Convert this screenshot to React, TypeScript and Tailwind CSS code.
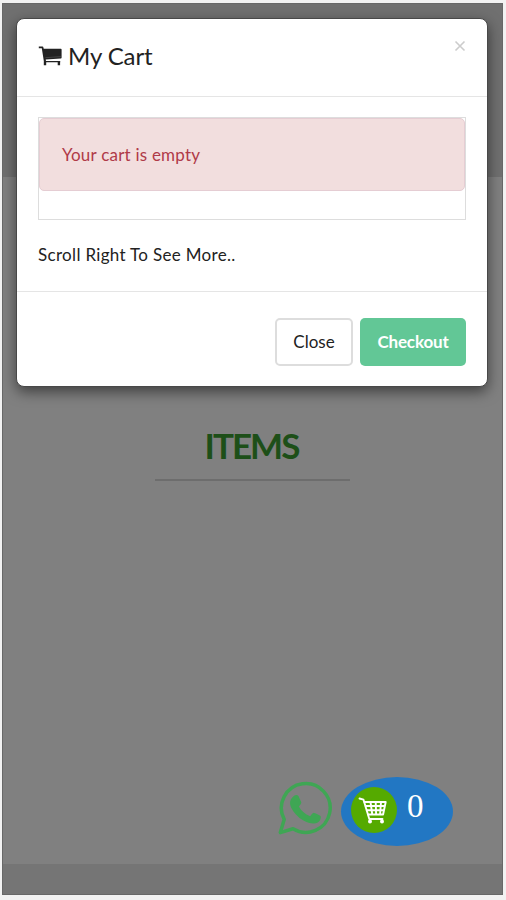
import React from 'react';

const CartIcon: React.FC = () => (
  <svg viewBox="0 0 24 21" className="h-[21px] w-6 shrink-0" fill="#222">
    <path d="M.8.6h3.7c.5 0 .8.3.9.8l.3 1.400h17.200c.4 0 .7.3.7.7v8.300c0 .5-.3.8-.8.8L7.700 13.500l.3 1.600h14.200v1.200H6.800c-.5 0-.8-.3-.9-.7L3.800 2.200H.8z" />
    <path d="M5.800 15.500h2.400v3.700H5.800zM19.700 15.500h2.400v3.700h-2.400z" />
    <path d="M7.400 11.700l15.500-1.100" stroke="#fff" strokeOpacity=".3" strokeWidth=".5" />
  </svg>
);

const WhatsappIcon: React.FC = () => (
  <svg viewBox="0 0 56 56" className="h-14 w-14" fill="none" stroke="#3fa654">
    <path d="M3.300 52.600l3.900-13.200A24.400 24.400 0 1 1 16 48.800z" strokeWidth="3.500" strokeLinejoin="round" />
    <path
      d="M16.500 16.300c2-2 4.300-1.800 5.200.1l2.500 5.600c.5 1.200-.7 2.800-2.300 4.400 2.600 4.500 6.100 7.800 11.200 9.800 1.200-1.200 2.300-3.400 3.600-3.500 1.500.2 5 2.100 6.500 3 1.300.9.500 4.600-1.700 6.200-4 2.900-9.300 1.800-15.100-1.300-5.600-3.100-9.700-8-12.100-12.600-2.200-4.600-1.500-8.700 2.200-11.700z"
      fill="#3fa654"
      stroke="none"
    />
  </svg>
);

const BasketIcon: React.FC = () => (
  <svg viewBox="0 0 46 46" className="h-[46px] w-[46px] shrink-0">
    <circle cx="23" cy="23" r="23" fill="#55aa00" />
    <g fill="none" stroke="#fff" strokeWidth="1.900" strokeLinecap="round" strokeLinejoin="round">
      <path d="M8.500 11.500l4 1.200 5.800 19.300h13.200" />
      <path d="M13.500 15h21.200l-2.600 12.500h-15M14.700 19h19M15.800 23.300h17M19.500 15l1.700 12M24.700 15l.4 12M30 15l-.9 12" />
    </g>
    <circle cx="19" cy="34.600" r="2" fill="#fff" />
    <circle cx="31" cy="34.600" r="2" fill="#fff" />
  </svg>
);

const App: React.FC = () => {
  return (
    <div className="h-[900px] w-[506px] bg-[#f2f2f2] pl-[2px] pt-[3px] font-[Lato,sans-serif]">
      <div className="relative flex h-[892px] w-[501px] flex-col border border-[#686868] bg-[#808080]">
        {/* Dimmed page */}
        <div className="h-[173px] shrink-0 bg-[#707070]" />
        <div className="flex flex-1 flex-col items-center pt-[246px]">
          <h2 className="pr-[2px] text-[35px] font-bold leading-[44px] tracking-[-2px] text-[#1d4f18]">ITEMS</h2>
          <div className="mt-[12px] h-[2px] w-[195px] bg-[#6d6d6d]" />
        </div>
        <div className="h-[30px] shrink-0 bg-[#757575]" />

        {/* Floating buttons */}
        <div className="absolute bottom-[48px] right-[49px] flex items-start gap-[8px]">
          <div className="pt-[3px]">
            <WhatsappIcon />
          </div>
          <button className="flex h-[69px] w-[112px] items-center rounded-[50%] bg-[#2277c3] pb-[3px] pl-[10px]">
            <BasketIcon />
            <span className="-mt-2 ml-[10px] font-['Liberation_Serif',serif] text-[33px] leading-none text-white">0</span>
          </button>
        </div>

        {/* Cart dialog */}
        <div className="absolute left-[13px] top-[14px] h-[369px] w-[472px] rounded-lg border border-[#484848] bg-white text-[#222] shadow-[0_5px_14px_rgba(0,0,0,0.5)]">
          <div className="flex h-[78px] items-start justify-between border-b border-[#e5e5e5] px-[21px]">
            <h4 className="flex items-center gap-[6px] pt-[22px] text-[24px] leading-[30px]">
              <CartIcon />
              <span className="tracking-[-0.1px]">My Cart</span>
            </h4>
            <button className="mt-[17px]" aria-label="Close">
              <svg viewBox="0 0 12 12" className="h-3 w-3 translate-y-1" stroke="#ccc" strokeWidth="1.600">
                <path d="M1.500 1.500l9 9M10.500 1.500l-9 9" />
              </svg>
            </button>
          </div>
          <div className="h-[195px] border-b border-[#e5e5e5] px-[21px] pt-[20px]">
            <div className="h-[103px] border border-[#ddd]">
              <div className="flex h-[73px] items-center rounded-[5px] border border-[#e5cdd3] bg-[#f2dede] pl-[22px] text-[17px] text-[#b03a48]">
                <span className="tracking-[0.22px]">Your cart is empty</span>
              </div>
            </div>
            <p className="mt-[23px] text-[17px] leading-6 tracking-[0.32px]">Scroll Right To See More..</p>
          </div>
          <div className="flex justify-end gap-[7px] pr-[21px] pt-[26px] text-[17px]">
            <button className="h-[48px] w-[78px] rounded-[5px] border-2 border-[#ddd] bg-white">Close</button>
            <button className="h-[48px] w-[106px] rounded-[5px] bg-[#62c796] font-bold tracking-[-0.15px] text-white">Checkout</button>
          </div>
        </div>
      </div>
    </div>
  );
};

export default App;
